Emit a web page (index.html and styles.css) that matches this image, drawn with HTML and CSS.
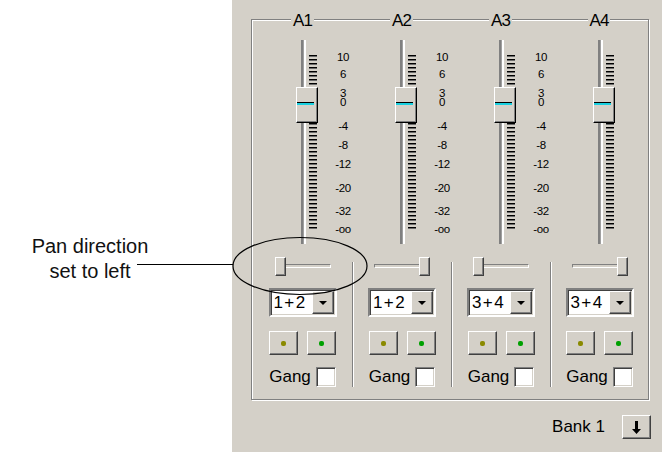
FILE: index.html
```html
<!DOCTYPE html>
<html lang="en">
<head>
    <meta charset="UTF-8">
    <title>Mixer Pan</title>
    <link rel="stylesheet" href="styles.css">
</head>
<body>
    <div class="page">
        <div class="note">
            <p class="note-text">Pan direction<br>set to left</p>
        </div>

        <div class="panel">
            <div class="group">
                <!-- A1 -->
                <div class="channel">
                    <span class="channel-name">A1</span>
                    <div class="strip">
                        <div class="fader">
                            <div class="fader-track"></div>
                            <div class="fader-ticks"></div>
                            <div class="fader-thumb"><div class="fader-mark"></div></div>
                        </div>
                        <div class="scale">
                            <span>10</span><span>6</span><span>3</span><span>0</span><span>-4</span>
                            <span>-8</span><span>-12</span><span>-20</span><span>-32</span><span>-oo</span>
                        </div>
                    </div>
                    <div class="lower">
                        <div class="pan">
                            <div class="pan-groove"></div>
                            <div class="pan-thumb"></div>
                        </div>
                        <div class="combo">
                            <span class="combo-value">1+2</span>
                            <span class="combo-btn"><svg width="8" height="4" viewBox="0 0 8 4"><polygon points="0,0 8,0 4,4" fill="#000"/></svg></span>
                        </div>
                        <div class="leds">
                            <span class="led-btn"><i class="dot olive"></i></span>
                            <span class="led-btn"><i class="dot green"></i></span>
                        </div>
                        <div class="gang">Gang <span class="check"></span></div>
                    </div>
                </div>

                <!-- A2 -->
                <div class="channel">
                    <span class="channel-name">A2</span>
                    <div class="strip">
                        <div class="fader">
                            <div class="fader-track"></div>
                            <div class="fader-ticks"></div>
                            <div class="fader-thumb"><div class="fader-mark"></div></div>
                        </div>
                        <div class="scale">
                            <span>10</span><span>6</span><span>3</span><span>0</span><span>-4</span>
                            <span>-8</span><span>-12</span><span>-20</span><span>-32</span><span>-oo</span>
                        </div>
                    </div>
                    <div class="lower divided">
                        <div class="pan right">
                            <div class="pan-groove"></div>
                            <div class="pan-thumb"></div>
                        </div>
                        <div class="combo">
                            <span class="combo-value">1+2</span>
                            <span class="combo-btn"><svg width="8" height="4" viewBox="0 0 8 4"><polygon points="0,0 8,0 4,4" fill="#000"/></svg></span>
                        </div>
                        <div class="leds">
                            <span class="led-btn"><i class="dot olive"></i></span>
                            <span class="led-btn"><i class="dot green"></i></span>
                        </div>
                        <div class="gang">Gang <span class="check"></span></div>
                    </div>
                </div>

                <!-- A3 -->
                <div class="channel">
                    <span class="channel-name">A3</span>
                    <div class="strip">
                        <div class="fader">
                            <div class="fader-track"></div>
                            <div class="fader-ticks"></div>
                            <div class="fader-thumb"><div class="fader-mark"></div></div>
                        </div>
                        <div class="scale">
                            <span>10</span><span>6</span><span>3</span><span>0</span><span>-4</span>
                            <span>-8</span><span>-12</span><span>-20</span><span>-32</span><span>-oo</span>
                        </div>
                    </div>
                    <div class="lower divided">
                        <div class="pan">
                            <div class="pan-groove"></div>
                            <div class="pan-thumb"></div>
                        </div>
                        <div class="combo">
                            <span class="combo-value">3+4</span>
                            <span class="combo-btn"><svg width="8" height="4" viewBox="0 0 8 4"><polygon points="0,0 8,0 4,4" fill="#000"/></svg></span>
                        </div>
                        <div class="leds">
                            <span class="led-btn"><i class="dot olive"></i></span>
                            <span class="led-btn"><i class="dot green"></i></span>
                        </div>
                        <div class="gang">Gang <span class="check"></span></div>
                    </div>
                </div>

                <!-- A4 -->
                <div class="channel">
                    <span class="channel-name">A4</span>
                    <div class="strip">
                        <div class="fader">
                            <div class="fader-track"></div>
                            <div class="fader-ticks"></div>
                            <div class="fader-thumb"><div class="fader-mark"></div></div>
                        </div>
                    </div>
                    <div class="lower divided">
                        <div class="pan right">
                            <div class="pan-groove"></div>
                            <div class="pan-thumb"></div>
                        </div>
                        <div class="combo">
                            <span class="combo-value">3+4</span>
                            <span class="combo-btn"><svg width="8" height="4" viewBox="0 0 8 4"><polygon points="0,0 8,0 4,4" fill="#000"/></svg></span>
                        </div>
                        <div class="leds">
                            <span class="led-btn"><i class="dot olive"></i></span>
                            <span class="led-btn"><i class="dot green"></i></span>
                        </div>
                        <div class="gang">Gang <span class="check"></span></div>
                    </div>
                </div>
            </div>

            <div class="bank">
                <span>Bank 1</span>
                <span class="bank-btn"><svg width="9" height="13" viewBox="0 0 9 13"><path d="M3 0h3v8h3l-4.5 5-4.5-5h3z" fill="#000"/></svg></span>
            </div>
        </div>

        <svg class="callout" width="662" height="452">
            <line x1="137" y1="264.5" x2="233" y2="264.5" stroke="#000" stroke-width="1"/>
            <ellipse cx="300" cy="266" rx="67" ry="28.5" fill="none" stroke="#000" stroke-width="1.2"/>
        </svg>
    </div>
</body>
</html>
```

FILE: styles.css
```css
body {
    margin: 0;
    padding: 0;
    background: #fff;
    font-family: "Liberation Sans", Arial, sans-serif;
}
.page {
    position: relative;
    display: flex;
    width: 662px;
    height: 452px;
    overflow: hidden;
}

/* annotation */
.note {
    width: 232px;
    flex: none;
}
.note-text {
    width: 180px;
    margin: 234px 0 0;
    text-align: center;
    font-family: "Liberation Sans", Arial, sans-serif;
    font-size: 20px;
    line-height: 25px;
    color: #111;
}
.callout {
    position: absolute;
    left: 0;
    top: 0;
    pointer-events: none;
}

/* panel */
.panel {
    flex: 1;
    background: #d4d0c8;
    padding: 19px 13px 0 19px;
    color: #000;
}
.group {
    display: grid;
    grid-template-columns: 99px 99px 99px 98px;
    padding: 0 0 12px 1px;
    border: 1px solid #808080;
    box-shadow: inset 1px 1px 0 #fff, 1px 1px 0 #fff;
}
.channel {
    display: flex;
    flex-direction: column;
}
.channel-name {
    align-self: center;
    margin-top: -8px;
    padding: 0 2px;
    background: #d4d0c8;
    font-size: 17px;
    line-height: 18px;
    letter-spacing: -1px;
}

/* fader + scale */
.strip {
    display: flex;
    margin-top: 8px;
    padding-left: 43px;
    height: 206px;
}
.fader {
    display: grid;
    width: 22px;
    height: 206px;
}
.fader > div {
    grid-area: 1 / 1;
    justify-self: start;
    align-self: start;
}
.fader-track {
    margin: 2px 0 0 5px;
    width: 5px;
    height: 204px;
    background: linear-gradient(to right, #808080 0 2px, #a0a0a0 2px 3px, #fff 3px 5px);
}
.fader-ticks {
    margin: 17px 0 0 13px;
    width: 8px;
    height: 174px;
    background: repeating-linear-gradient(to bottom, #000 0 1px, #6a6a6a 1px 2px, transparent 2px 4px);
}
.fader-thumb {
    margin-top: 49px;
    width: 22px;
    height: 36px;
    box-sizing: border-box;
}
.fader-mark {
    margin: 14px 3px 0 0;
    height: 2px;
    border-top: 1px solid #000;
    background: #18d0e0;
}
.scale {
    display: flex;
    flex-direction: column;
    width: 22px;
    margin-left: 16px;
    font-size: 11.5px;
    line-height: 9px;
    letter-spacing: -0.3px;
    text-align: center;
}
.scale span { height: 9px; }
.scale span:nth-child(1) { margin-top: 15px; }
.scale span:nth-child(2) { margin-top: 7.5px; }
.scale span:nth-child(3) { margin-top: 10px; }
.scale span:nth-child(4) { margin-top: 0; }
.scale span:nth-child(5) { margin-top: 15px; }
.scale span:nth-child(6) { margin-top: 10px; }
.scale span:nth-child(7) { margin-top: 10px; }
.scale span:nth-child(8) { margin-top: 15.5px; }
.scale span:nth-child(9) { margin-top: 14px; }
.scale span:nth-child(10) { margin-top: 9px; }

/* lower controls */
.lower {
    display: flex;
    flex-direction: column;
    align-items: center;
    margin-top: 18px;
}
.lower.divided {
    border-left: 1px solid #808080;
    box-shadow: inset 1px 0 0 #fff;
}
.pan {
    display: grid;
    width: 56px;
    height: 19px;
    margin-top: -5px;
}
.pan > div {
    grid-area: 1 / 1;
}
.pan-groove {
    align-self: center;
    height: 4px;
    box-sizing: border-box;
    border: 1px solid;
    border-color: #808080 #fff #fff #808080;
    background: #d4d0c8;
    margin-top: -1px;
}
.pan-thumb {
    justify-self: start;
    width: 11px;
    height: 19px;
    box-sizing: border-box;
}
.pan.right .pan-thumb {
    justify-self: end;
}

.fader-thumb,
.pan-thumb,
.led-btn,
.combo-btn,
.bank-btn {
    background: #d4d0c8;
    border: 1px solid;
    border-color: #fff #404040 #404040 #fff;
    box-shadow: inset -1px -1px 0 #808080;
}
.fader-thumb {
    border-color: #fff #000 #000 #fff;
}

.combo {
    display: flex;
    width: 68px;
    height: 29px;
    margin-top: 12px;
    box-sizing: border-box;
    border: 2px solid;
    border-color: #808080 #fff #fff #808080;
    box-shadow: inset 1px 1px 0 #404040, inset -1px -1px 0 #d4d0c8;
    background: #fff;
    padding: 1px;
}
.combo-value {
    flex: 1;
    padding-left: 2px;
    font-size: 17px;
    line-height: 23px;
    letter-spacing: 1.4px;
}
.combo-btn {
    width: 22px;
    box-sizing: border-box;
    display: flex;
    align-items: center;
    justify-content: center;
}

.leds {
    display: flex;
    gap: 9px;
    margin-top: 14px;
}
.led-btn {
    width: 29px;
    height: 24px;
    box-sizing: border-box;
    display: flex;
    align-items: center;
    justify-content: center;
}
.dot {
    width: 5px;
    height: 5px;
    border-radius: 2px;
}
.dot.olive { background: #8a8a00; }
.dot.green { background: #00a000; }

.gang {
    display: flex;
    align-items: center;
    gap: 5px;
    margin-top: 12px;
    height: 20px;
    font-size: 17px;
}
.check {
    width: 20px;
    height: 20px;
    box-sizing: border-box;
    border: 1px solid;
    border-color: #808080 #fff #fff #808080;
    box-shadow: inset 1px 1px 0 #404040, inset -1px -1px 0 #d4d0c8;
    background: #fff;
}

/* bank */
.bank {
    display: flex;
    justify-content: flex-end;
    align-items: center;
    gap: 17px;
    margin: 15px -2px 0 0;
    font-size: 17px;
}
.bank-btn {
    width: 29px;
    height: 24px;
    box-sizing: border-box;
    display: flex;
    align-items: center;
    justify-content: center;
}
```
